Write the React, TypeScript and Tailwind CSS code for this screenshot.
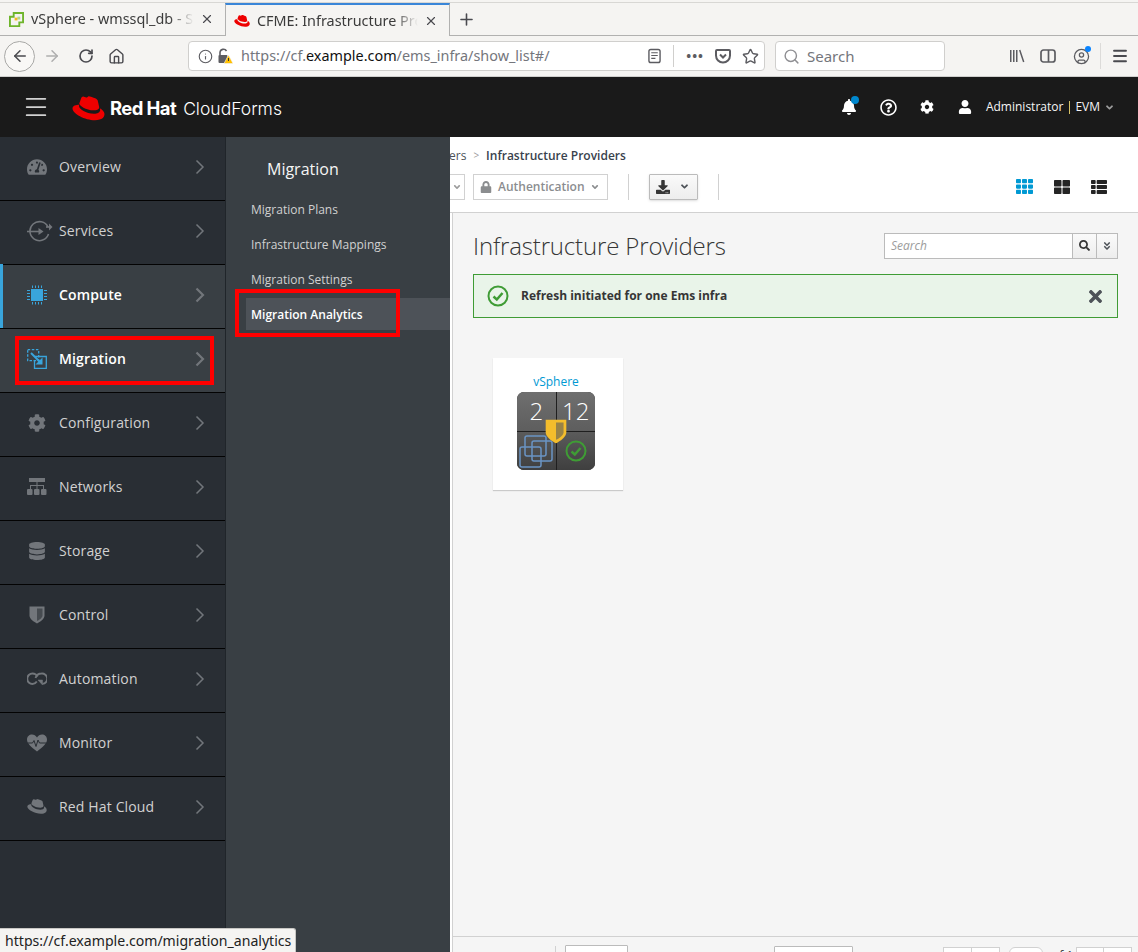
import React from 'react';
import {
  ArrowLeft,
  ArrowRight,
  RotateCw,
  Home,
  Info,
  X,
  Plus,
  Star,
  Search,
  Menu,
  CircleUser,
} from 'lucide-react';
import {
  FaTachometerAlt,
  FaCog,
  FaBell,
  FaUser,
  FaDatabase,
  FaLock,
  FaDownload,
  FaSearch,
  FaTimes,
  FaTh,
  FaThLarge,
  FaThList,
  FaAngleDoubleDown,
  FaAngleDown,
  FaRegQuestionCircle,
} from 'react-icons/fa';

const HatIcon = ({ className }: { className?: string }) => (
  <svg viewBox="0 0 32 24" className={className} fill="currentColor">
    <path d="M21.3 13.8c2.1 0 5.100-.4 5.100-2.900 0-.2 0-.4-.1-.6l-1.200-5.400c-.3-1.200-.5-1.700-2.600-2.800C20.900 1.300 17.300 0 16.300 0c-1 0-1.300 1.300-2.400 1.300-1.100 0-2-.9-3-.9-1 0-1.700.7-2.200 2.100 0 0-1.400 4-1.600 4.600 0 .1 0 .2 0 .3 0 1.500 6 6.400 14.200 6.400z" />
    <path d="M27 11.700c.3 1.400.3 1.500.3 1.700 0 2.300-2.600 3.600-6 3.600-7.700 0-14.500-4.500-14.500-7.500 0-.4.100-.8.300-1.200C4 8.400.5 8.900.5 12c0 5.100 12.100 11.400 21.700 11.400 7.400 0 9.300-3.300 9.300-6 0-2.100-1.800-4.400-4.500-5.700z" />
  </svg>
);

const ServicesIcon = () => (
  <svg viewBox="0 0 26 22" className="w-[26px] h-[22px] ml-[5px]" fill="none" stroke="currentColor" strokeWidth="1.600">
    <path d="M21 7A9.500 9.500 0 1 0 21.500 14" />
    <path d="M19 7 L23 7" />
    <path d="M22 3.500 L25.500 7 L22 10.500 Z" fill="currentColor" stroke="none" />
    <path d="M0 11.500 L14 11.500" />
    <path d="M11.500 8 L16.500 11.500 L11.500 15 Z" fill="currentColor" stroke="none" />
  </svg>
);

const ChipIcon = () => (
  <svg viewBox="0 0 20 20" className="w-5 h-5" fill="currentColor">
    <rect x="4" y="4" width="12" height="12" />
    <path d="M5 0.500h1v2.500H5zM8 .5h1V3H8zM11 .5h1V3h-1zM14 .5h1V3h-1zM5 17h1v2.500H5zM8 17h1v2.500H8zM11 17h1v2.500h-1zM14 17h1v2.500h-1zM0 5h3v1H0zM0 8h3v1H0zM0 11h3v1H0zM0 14h3v1H0zM17 5h3v1h-3zM17 8h3v1h-3zM17 11h3v1h-3zM17 14h3v1h-3z" />
  </svg>
);

const MigrationIcon = () => (
  <svg viewBox="0 0 20 20" className="w-5 h-5" fill="none" stroke="currentColor" strokeWidth="1.300">
    <rect x="0.700" y="0.700" width="11" height="11" strokeDasharray="2.500 1.600" />
    <path d="M8 7.500h11.300v11.800H7.500V11" />
    <path d="M4 4 L13 13" strokeWidth="2" />
    <path d="M8.500 15.500 L15.500 15.500 L15.500 8.500 Z" fill="currentColor" stroke="none" />
  </svg>
);

const NetworksIcon = () => (
  <svg viewBox="0 0 20 18" className="w-5 h-[18px]" fill="currentColor">
    <path d="M2 0h16v4H2zM9.500 4h1v3h6.500v4h-1V8h-5.500v3h-1V8H4v3H3V7h6.500z" />
    <rect x="0" y="11" width="5.500" height="6" rx="1" />
    <rect x="7" y="11" width="5.500" height="6" rx="1" />
    <rect x="14" y="11" width="5.500" height="6" rx="1" />
  </svg>
);

const ShieldIcon = ({ className, shade = '#292e34' }: { className?: string; shade?: string }) => (
  <svg viewBox="0 0 16 18" className={className}>
    <path d="M0.500 0.500H15.500V9.500C15.500 13 11 16 8 17.500C5 16 0.500 13 0.500 9.500Z" fill="currentColor" />
    <path d="M8 2.500H13.500V9.500C13.500 11.500 10.500 14 8 15Z" fill={shade} fillOpacity="0.6" />
  </svg>
);

const AutomationIcon = () => (
  <svg viewBox="0 0 20 14" className="w-5 h-[14px]" fill="none" stroke="currentColor" strokeWidth="1.900">
    <path d="M10.500 4.500C9.500 2.500 7.500 1.500 5.500 1.500a5 5 0 0 0 0 10.500c2 0 3.300-1 4.300-2.500" />
    <path d="M8.500 6C9.500 3 11.800 1.500 14.500 1.500a5 5 0 0 1 1 10.400" />
    <path d="M11 8 L15.500 8 L15.500 13 Z" fill="currentColor" strokeWidth="0.500" />
  </svg>
);

const HeartPulseIcon = () => (
  <svg viewBox="0 0 20 18" className="w-5 h-[18px]">
    <path d="M10 17.500C4 13 0 9.500 0 5.500 0 2.500 2.300.5 5 .5c2 0 3.800 1 5 3 1.200-2 3-3 5-3 2.700 0 5 2 5 5 0 4-4 7.500-10 12z" fill="currentColor" />
    <path d="M0.500 9h5l1.500-2.500L9 12.500 11 6l1.500 3h7" fill="none" stroke="#292e34" strokeWidth="1" />
  </svg>
);

const Chevron = ({ bold }: { bold?: boolean }) => (
  <svg viewBox="0 0 10 16" className="w-[10px] h-4" fill="none" stroke="#72767b" strokeWidth={bold ? 2.200 : 1.500}>
    <path d="M1.500 1.500 L8 8 L1.500 14.500" />
  </svg>
);

const PocketIcon = () => (
  <svg viewBox="0 0 16 16" className="w-4 h-4" fill="none" stroke="#5c5c61" strokeWidth="2">
    <path d="M2 2h12a1 1 0 0 1 1 1v4.500a7 7 0 0 1-14 0V3a1 1 0 0 1 1-1z" />
    <path d="M5 6.500 L8 9.500 L11 6.500" />
  </svg>
);

const LibraryIcon = () => (
  <svg viewBox="0 0 16 16" className="w-4 h-4" fill="#5c5c61">
    <path d="M1 2h1.500v12H1zM4 2h1.500v12H4zM7 2h1.500v12H7zM10 2.300l1.400-.5 4 12-1.400.5z" />
  </svg>
);

const SidebarIcon = () => (
  <svg viewBox="0 0 16 16" className="w-4 h-4" fill="none" stroke="#5c5c61" strokeWidth="1.700">
    <rect x="1" y="2" width="14" height="12" rx="2.500" />
    <path d="M8.500 2v12" />
  </svg>
);

const ReaderIcon = () => (
  <svg viewBox="0 0 14 16" className="w-[13px] h-[16px]" fill="none" stroke="#5c5c61" strokeWidth="1.500">
    <rect x="1" y="1" width="12" height="14" rx="2" />
    <path d="M3.500 4.500h7M3.500 7.500h7M3.500 10.500h4.500" strokeWidth="1.200" />
  </svg>
);

const LockWarnIcon = () => (
  <svg viewBox="0 0 16 16" className="w-4 h-4">
    <path d="M3 7V4.500a3.500 3.500 0 0 1 6.500-1.500" fill="none" stroke="#5c5c61" strokeWidth="1.600" />
    <rect x="1.500" y="7" width="9" height="8" rx="1" fill="#5c5c61" />
    <path d="M11.500 7L16 15.500H7Z" fill="#ffbf00" stroke="#f5f4f2" strokeWidth="0.600" />
    <path d="M11.500 10v3" stroke="#333" strokeWidth="1" />
  </svg>
);

const VSphereFavicon = () => (
  <svg viewBox="0 0 16 16" className="w-[15px] h-[15px]">
    <path d="M5 1h10v10h-4v4H1V5h4z" fill="none" stroke="#6fb52c" strokeWidth="2" />
    <path d="M6 6h3v3H6z" fill="#f5b81f" />
    <path d="M9 5h3v3H9z" fill="#6fb52c" opacity="0.5" />
  </svg>
);

const CheckCircle = ({ className }: { className?: string }) => (
  <svg viewBox="0 0 22 22" className={className} fill="none" stroke="currentColor">
    <circle cx="11" cy="11" r="9.500" strokeWidth="2" />
    <path d="M6.500 11.500 L9.800 14.500 L15.500 8" strokeWidth="2.500" />
  </svg>
);

const navItems: { label: string; icon: React.ReactNode; active?: boolean }[] = [
  { label: 'Overview', icon: <FaTachometerAlt size={20} /> },
  { label: 'Services', icon: <ServicesIcon /> },
  { label: 'Compute', icon: <ChipIcon />, active: true },
  { label: 'Migration', icon: <MigrationIcon />, active: true },
  { label: 'Configuration', icon: <FaCog size={18} /> },
  { label: 'Networks', icon: <NetworksIcon /> },
  { label: 'Storage', icon: <FaDatabase size={18} /> },
  { label: 'Control', icon: <ShieldIcon className="w-4 h-[18px]" /> },
  { label: 'Automation', icon: <AutomationIcon /> },
  { label: 'Monitor', icon: <HeartPulseIcon /> },
  { label: 'Red Hat Cloud', icon: <HatIcon className="w-5 h-[15px]" /> },
];

const subItems = ['Migration Plans', 'Infrastructure Mappings', 'Migration Settings', 'Migration Analytics'];

const BrowserTab = ({ title, icon, active }: { title: string; icon: React.ReactNode; active?: boolean }) => (
  <div
    className={`w-[225px] h-[33px] flex items-center pl-2 pr-[11px] gap-[6px] ${
      active ? 'border-t-2 border-t-[#3a86d8] border-x border-x-[#b1b1b0]' : 'border-b border-b-[#b1b1b0]'
    }`}
  >
    <span className="w-4 flex justify-center shrink-0">{icon}</span>
    <span
      className="flex-1 min-w-0 whitespace-nowrap overflow-hidden text-[14.400px] text-[#3b3b3b] ml-px"
      style={{ maskImage: 'linear-gradient(to right, black 85%, transparent)' }}
    >
      {title}
    </span>
    <X size={14} strokeWidth={2} className="text-[#4a4a4f] shrink-0" />
  </div>
);

export default function App() {
  return (
    <div className="relative h-screen w-full overflow-hidden flex flex-col bg-white font-['Open_Sans',sans-serif]">
      {/* Browser chrome */}
      <div className="shrink-0 h-[77px] bg-[#f5f4f2] font-['Noto_Sans',sans-serif]">
        <div className="h-[3px] border-b border-[#d8d7d4]" />
        <div className="flex h-[33px]">
          <BrowserTab title="vSphere - wmssql_db - Summary" icon={<VSphereFavicon />} />
          <BrowserTab title="CFME: Infrastructure Providers" icon={<HatIcon className="w-4 h-3 text-[#e00]" />} active />
          <div className="flex-1 border-b border-[#b1b1b0] pl-[7px] flex items-center">
            <Plus size={19} strokeWidth={2} className="text-[#4a4a4f]" />
          </div>
        </div>
        <div className="h-[41px] flex items-center border-b border-[#cfcfcd] pl-[4px]">
          <div className="w-[31px] h-[31px] rounded-full border border-[#a8a8a6] bg-[#f9f8f6] flex items-center justify-center">
            <ArrowLeft size={18} strokeWidth={2} className="text-[#4a4a4f]" />
          </div>
          <ArrowRight size={18} strokeWidth={2} className="text-[#aeaeae] ml-[8px]" />
          <RotateCw size={16} strokeWidth={2.500} className="text-[#4a4a4f] ml-[17px]" />
          <Home size={17} strokeWidth={2} className="text-[#4a4a4f] ml-[14px]" />
          <div className="ml-[63px] w-[577px] h-[30px] bg-white border border-[#d0cfcd] rounded-[4px] flex items-center pl-[9px] pr-[5px]">
            <Info size={15} strokeWidth={1.800} className="text-[#5c5c61] shrink-0" />
            <span className="ml-[4px] shrink-0">
              <LockWarnIcon />
            </span>
            <span className="ml-[8px] text-[14.400px] text-[#74767c] whitespace-nowrap flex-1">
              https://cf.<span className="text-[#111]">example.com</span>/ems_infra/show_list#/
            </span>
            <ReaderIcon />
            <span className="w-px h-[22px] bg-[#d0cfcd] mx-[12px]" />
            <span className="text-[#5c5c61] text-[13px] font-bold tracking-[1px] leading-none mr-[11px]">•••</span>
            <PocketIcon />
            <Star size={17} strokeWidth={2} className="text-[#5c5c61] ml-[11px]" />
          </div>
          <div className="ml-[10px] w-[170px] h-[30px] bg-white border border-[#d0cfcd] rounded-[4px] flex items-center pl-[7px]">
            <Search size={17} strokeWidth={2} className="text-[#8f8f93]" />
            <span className="ml-[7px] text-[15px] text-[#74767c]">Search</span>
          </div>
          <div className="flex items-center ml-[64px]">
            <LibraryIcon />
            <span className="ml-[15px]">
              <SidebarIcon />
            </span>
            <span className="relative ml-[17px]">
              <CircleUser size={17} strokeWidth={1.800} className="text-[#5c5c61]" />
              <span className="absolute -top-[2px] -right-[1px] w-[6px] h-[6px] rounded-full bg-[#0a84ff]" />
            </span>
            <span className="w-px h-[26px] bg-[#dcdbd9] ml-[10px]" />
            <Menu size={18} strokeWidth={2.500} className="text-[#4a4a4f] ml-[10px]" />
          </div>
        </div>
      </div>

      {/* App header */}
      <div className="shrink-0 h-[60px] bg-[#1a1a1a] flex items-center text-white">
        <Menu size={28} strokeWidth={1.500} className="ml-[22px] text-[#d1d1d1]" />
        <HatIcon className="ml-[22px] mt-[3px] w-[33px] h-[25px] text-[#e00]" />
        <span className="ml-[5px] mt-[4px] text-[18.500px] font-bold tracking-[-0.6px] font-['Inter',sans-serif]">Red Hat</span>
        <span className="ml-[7px] mt-[4px] text-[17.500px] font-light tracking-[0px] font-['Inter',sans-serif]">CloudForms</span>
        <div className="ml-auto flex items-center">
          <span className="relative">
            <FaBell size={16} />
            <span className="absolute -top-[3px] -right-[2px] w-[8px] h-[8px] rounded-full bg-[#0088ce]" />
          </span>
          <FaRegQuestionCircle size={17} className="ml-[23px]" />
          <FaCog size={14} className="ml-[23px]" />
          <FaUser size={14} className="ml-[24px]" />
          <span className="ml-[14px] text-[12px] text-[#f5f5f5]">Administrator</span>
          <span className="w-px h-[13px] bg-[#d6c266] ml-[6px] mr-[5px]" />
          <span className="text-[12px] text-[#f5f5f5]">EVM</span>
          <FaAngleDown size={11} className="ml-[4px] mr-[23px] text-[#9c9c9c]" />
        </div>
      </div>

      <div className="flex-1 min-h-0 flex">
        {/* Primary nav */}
        <div className="w-[226px] shrink-0 bg-[#292e34] border-r border-[#20252a]">
          {navItems.map((item) => (
            <div
              key={item.label}
              className={`relative h-16 flex items-center pb-1 border-b border-[#030303] ${
                item.active ? 'bg-[#393f44]' : ''
              }`}
            >
              {item.label === 'Compute' && <span className="absolute left-0 -top-px bottom-0 w-[3px] bg-[#39a5dc]" />}
              <span
                className={`w-[59px] pl-[15px] flex justify-center shrink-0 ${
                  item.active ? 'text-[#39a5dc]' : 'text-[#72767b]'
                }`}
              >
                {item.icon}
              </span>
              <span
                className={`flex-1 text-[14px] tracking-[0.15px] ${item.active ? 'font-semibold text-white' : 'text-[#d1d1d1]'}`}
              >
                {item.label}
              </span>
              <span className="mr-[20px] flex">
                <Chevron bold={item.active} />
              </span>
            </div>
          ))}
        </div>

        {/* Secondary nav */}
        <div className="w-[224px] shrink-0 bg-[#393f44] pt-[20px]">
          <div className="pl-[41px] text-[16px] leading-[24px] text-[#f5f5f5]">Migration</div>
          <div className="mt-[11px] pl-[20px]">
            {subItems.map((label) => (
              <div
                key={label}
                className={`flex items-center pl-[5px] text-[12px] ${
                  label === 'Migration Analytics'
                    ? 'bg-[#4d5258] text-white font-semibold h-[32px] mt-px pt-[1px]'
                    : 'h-[35px] text-[#d1d1d1]'
                }`}
              >
                {label}
              </div>
            ))}
          </div>
        </div>

        {/* Main content */}
        <div className="flex-1 min-w-0 flex flex-col overflow-hidden">
          <div className="shrink-0 h-[76px] bg-white border-b border-[#d1d1d1] relative">
            <div className="h-[37px] flex items-center text-[12px] text-[#4d5258] whitespace-nowrap -ml-px">
              <span>ers</span>
              <span className="mx-[7px] text-[#9c9c9c] text-[10px]">&gt;</span>
              <span className="font-semibold text-[#39424d]">Infrastructure Providers</span>
            </div>
            <div className="flex items-center h-[27px] mt-[-1px]">
              <div className="w-[15px] h-[26px] border border-l-0 border-[#d1d1d1] flex items-center justify-center">
                <FaAngleDown size={10} className="text-[#9c9c9c]" />
              </div>
              <div className="ml-[8px] w-[135px] h-[26px] border border-[#d1d1d1] flex items-center pl-[6px] text-[12px] font-semibold text-[#8b8d8f]">
                <FaLock size={12} className="text-[#8b8d8f]" />
                <span className="ml-[6px]">Authentication</span>
                <FaAngleDown size={10} className="ml-[5px]" />
              </div>
              <span className="ml-[20px] w-px h-[26px] bg-[#d1d1d1]" />
              <div className="ml-[20px] w-[49px] h-[26px] border border-[#bbb] rounded-[1px] bg-gradient-to-b from-[#fafafa] to-[#ededed] shadow-sm flex items-center pl-[6px] text-[#363636]">
                <FaDownload size={14} />
                <FaAngleDown size={11} className="ml-[9px] text-[#4d5258]" />
              </div>
              <span className="ml-[20px] w-px h-[26px] bg-[#d1d1d1]" />
              <FaTh size={17} className="ml-auto text-[#0099d3]" />
              <FaThLarge size={16} className="ml-[21px] text-[#252525]" />
              <FaThList size={16} className="ml-[21px] mr-[31px] text-[#252525]" />
            </div>
          </div>

          <div className="flex-1 min-h-0 flex flex-col bg-[#f5f5f5] ml-[2px] border-l border-[#d1d1d1]">
            <div className="flex-1 min-h-0 pl-[20px] pr-[20px]">
              <div className="flex items-center justify-between h-[61px] pt-[4px]">
                <h1 className="text-[24px] font-light tracking-[-0.15px] text-[#363636]">Infrastructure Providers</h1>
                <div className="flex h-[26px] text-[12px]">
                  <div className="w-[189px] bg-white border border-[#bbb] pl-[6px] flex items-center italic text-[#9c9c9c]">
                    Search
                  </div>
                  <div className="w-[24px] border border-l-0 border-[#bbb] bg-gradient-to-b from-[#fafafa] to-[#ededed] flex items-center justify-center">
                    <FaSearch size={11} className="text-[#363636]" />
                  </div>
                  <div className="w-[21px] border border-l-0 border-[#bbb] bg-gradient-to-b from-[#fafafa] to-[#ededed] flex items-center justify-center">
                    <FaAngleDoubleDown size={10} className="text-[#4d5258]" />
                  </div>
                </div>
              </div>
              <div className="h-[44px] border border-[#3f9c35] bg-[#e9f4e9] flex items-center pl-[13px] pr-[12px]">
                <CheckCircle className="w-[22px] h-[22px] text-[#3f9c35]" />
                <span className="ml-[12px] text-[12px] font-bold text-[#363636]">Refresh initiated for one Ems infra</span>
                <FaTimes size={19} className="ml-auto text-[#4d5258]" />
              </div>
              <div className="mt-[40px] ml-[20px] w-[130px] h-[132px] bg-white shadow-[0_1px_1px_rgba(3,3,3,0.175)] flex flex-col items-center pt-[15px] pr-[4px]">
                <div className="text-[12px] leading-[17px] text-[#0099d3]">vSphere</div>
                <div className="relative mt-[2px] w-[78px] h-[78px] rounded-[7px] overflow-hidden grid grid-cols-2 grid-rows-2 gap-px bg-[#1f1f1f]">
                  <div className="bg-gradient-to-b from-[#6f6f6f] to-[#5e5e5e] flex items-center justify-center text-white text-[24px] font-light">2</div>
                  <div className="bg-gradient-to-b from-[#6f6f6f] to-[#5e5e5e] flex items-center justify-center text-white text-[24px] font-light">12</div>
                  <div className="bg-gradient-to-b from-[#5b5b5b] to-[#3f3f3f]">
                    <svg viewBox="0 0 38 39" className="w-[38px] h-[39px]" fill="none" stroke="#6a94c4" strokeWidth="1.500">
                      <rect x="8" y="4" width="21" height="20" rx="2" />
                      <rect x="15" y="9" width="20" height="20" rx="2" />
                      <rect x="3" y="15" width="21" height="20" rx="2" />
                    </svg>
                  </div>
                  <div className="bg-gradient-to-b from-[#5b5b5b] to-[#3f3f3f] flex items-center justify-center">
                    <CheckCircle className="w-[22px] h-[22px] text-[#3f9c35]" />
                  </div>
                  <ShieldIcon className="absolute left-[28px] top-[26px] w-[22px] h-[27px] text-[#f4bd2c]" shade="#5a5a5a" />
                </div>
              </div>
            </div>
            <div className="shrink-0 h-[16px] border-t border-[#d1d1d1] bg-[#f5f5f5] overflow-hidden">
              <div className="flex items-start pl-[102px] pt-[9px]">
                <span className="w-px h-[8px] bg-[#d1d1d1]" />
                <span className="ml-[9px] -mt-px w-[63px] h-[12px] bg-white border border-[#bbb] rounded-[1px]" />
                <span className="ml-[17px] w-[129px] mt-[5px] text-[12px] font-bold leading-none text-[#363636]">It</span>
                <span className="w-[79px] h-[12px] bg-white border border-[#bbb] rounded-[1px]" />
                <span className="ml-[90px] mt-px w-[29px] h-[12px] bg-white border border-[#d1d1d1]" />
                <span className="mt-px w-[28px] h-[12px] bg-white border border-l-0 border-[#d1d1d1]" />
                <span className="ml-[9px] mt-px w-[34px] h-[12px] bg-white border border-[#d1d1d1] rounded-t-[6px] pr-[12px] pt-[3px] text-right text-[12px] leading-[14px] text-[#363636]">1</span>
                <span className="w-[33px] pl-[9px] mt-[3px] text-[12px] leading-[14px] text-[#363636] whitespace-nowrap">of 1</span>
                <span className="mt-px w-[28px] h-[12px] bg-white border border-[#d1d1d1]" />
                <span className="mt-px w-[28px] h-[12px] bg-white border border-l-0 border-[#d1d1d1]" />
              </div>
            </div>
          </div>
        </div>
      </div>

      {/* Red annotation boxes */}
      <div className="absolute left-[15px] top-[336px] w-[199px] h-[49px] border-4 border-[#ff0000]" />
      <div className="absolute left-[235px] top-[289px] w-[165px] h-[48px] border-4 border-[#ff0000]" />

      {/* Status tooltip */}
      <div className="absolute left-0 bottom-0 w-[296px] h-[24px] bg-[#f5f4f2] border-t border-r border-[#c8c7c4] rounded-tr-[3px] pl-[5px] flex items-center text-[14.100px] text-[#222] font-['Noto_Sans',sans-serif] whitespace-nowrap">
        https://cf.example.com/migration_analytics
      </div>
    </div>
  );
}
